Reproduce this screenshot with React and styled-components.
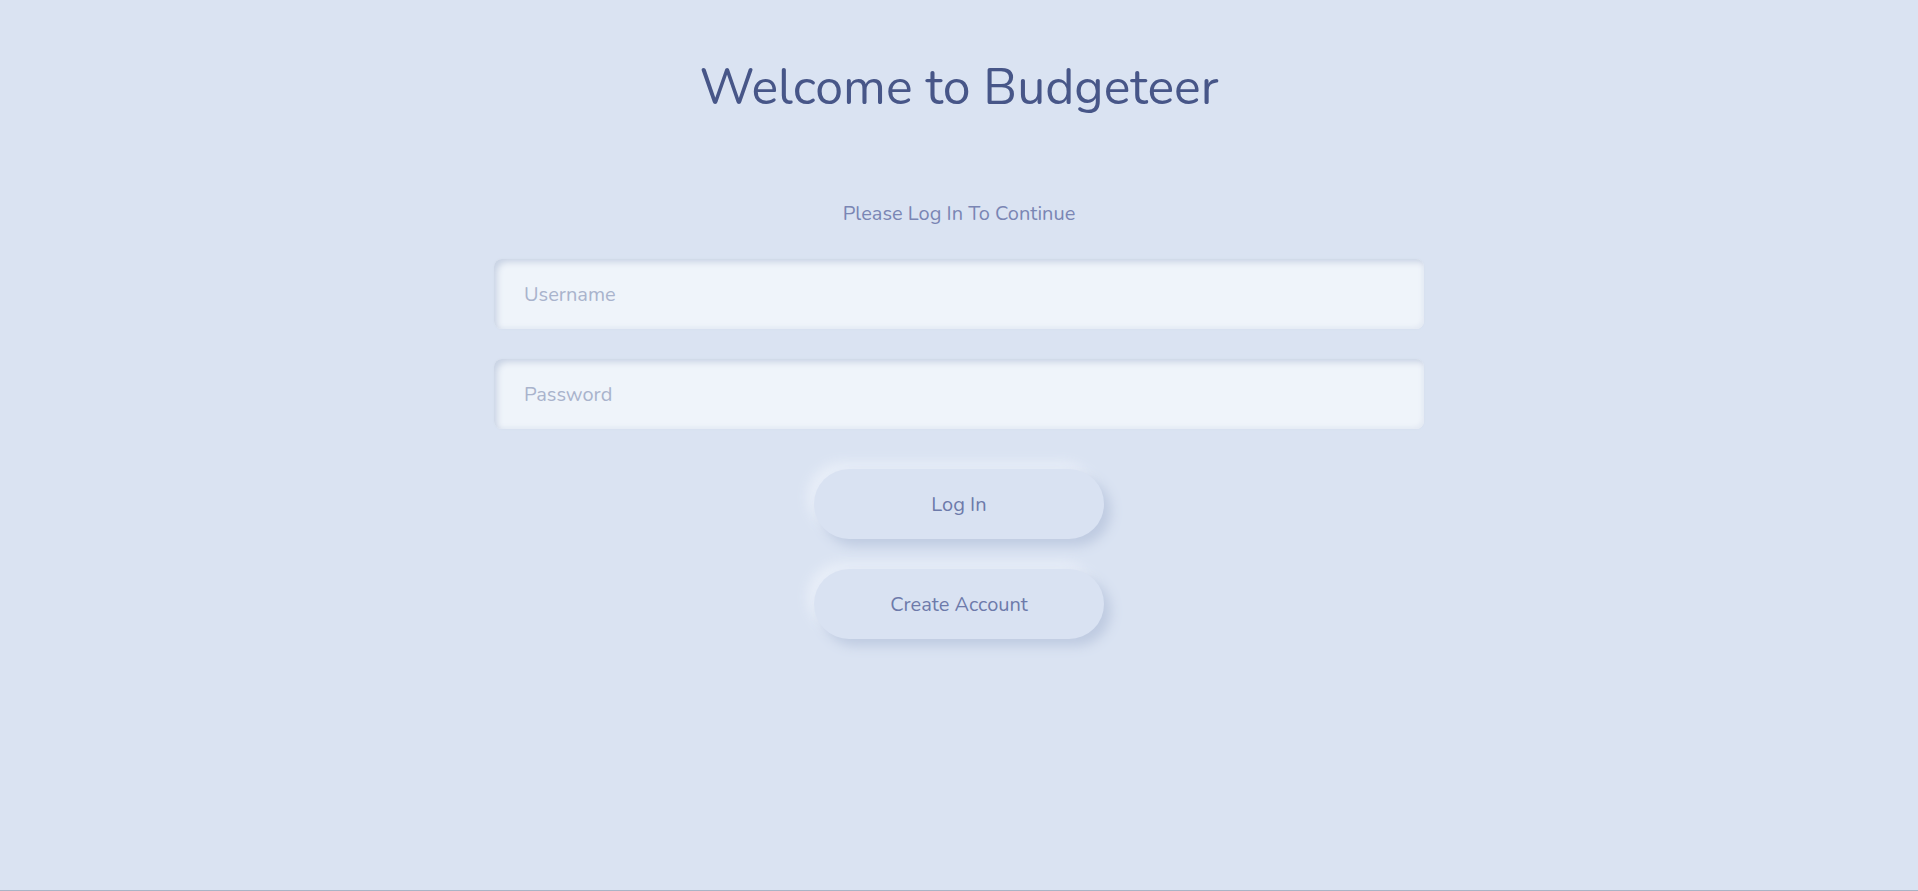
import React from "react";
import styled, { createGlobalStyle } from "styled-components";

const Global = createGlobalStyle`
  html, body { margin: 0; padding: 0; background: #dae3f2; }
  body { font-family: "Nunito", Lato, "Noto Sans", sans-serif; }
  * { box-sizing: border-box; }
`;

const Page = styled.main`
  min-height: 891px;
  display: flex;
  flex-direction: column;
  align-items: center;
  background: #dae3f2;
  border-bottom: 1px solid #a9b4c6;
`;

const Title = styled.h1`
  margin: 53px 0 0;
  font-size: 50px;
  font-weight: 400;
  line-height: 70px;
  color: #475688;
`;

const Subtitle = styled.p`
  margin: 78px 0 0;
  font-size: 20px;
  line-height: 26px;
  color: #7a86b4;
`;

const Form = styled.form`
  margin-top: 32px;
  width: 930px;
  display: flex;
  flex-direction: column;
  align-items: center;
  gap: 30px;
`;

const Actions = styled.div`
  margin-top: 10px;
  display: flex;
  flex-direction: column;
  align-items: center;
  gap: 30px;
`;

const Field = styled.input`
  width: 100%;
  height: 70px;
  border: none;
  outline: none;
  border-radius: 8px;
  padding: 0 30px;
  font-family: inherit;
  font-size: 20px;
  color: #465587;
  background: #eff4fa;
  box-shadow: inset 5px 5px 6px -2px #c9d3e4, inset -2px -2px 4px #e3e9f3,
    0 0 2px #d3dcea;
  &::placeholder { color: #a9b3cc; }
`;

const Button = styled.button`
  width: 290px;
  height: 70px;
  border: none;
  border-radius: 35px;
  background: #d9e2f2;
  font-family: inherit;
  font-size: 20px;
  color: #6d7aaa;
  cursor: pointer;
  box-shadow: 7px 7px 12px #bfcbe1, -7px -7px 12px #e8eef8;
`;

export default function App() {
  return (
    <>
      <Global />
      <Page>
        <Title>Welcome to Budgeteer</Title>
        <Subtitle>Please Log In To Continue</Subtitle>
        <Form onSubmit={(e) => e.preventDefault()}>
          <Field placeholder="Username" />
          <Field type="password" placeholder="Password" />
          <Actions>
            <Button type="submit">Log In</Button>
            <Button type="button">Create Account</Button>
          </Actions>
        </Form>
      </Page>
    </>
  );
}
